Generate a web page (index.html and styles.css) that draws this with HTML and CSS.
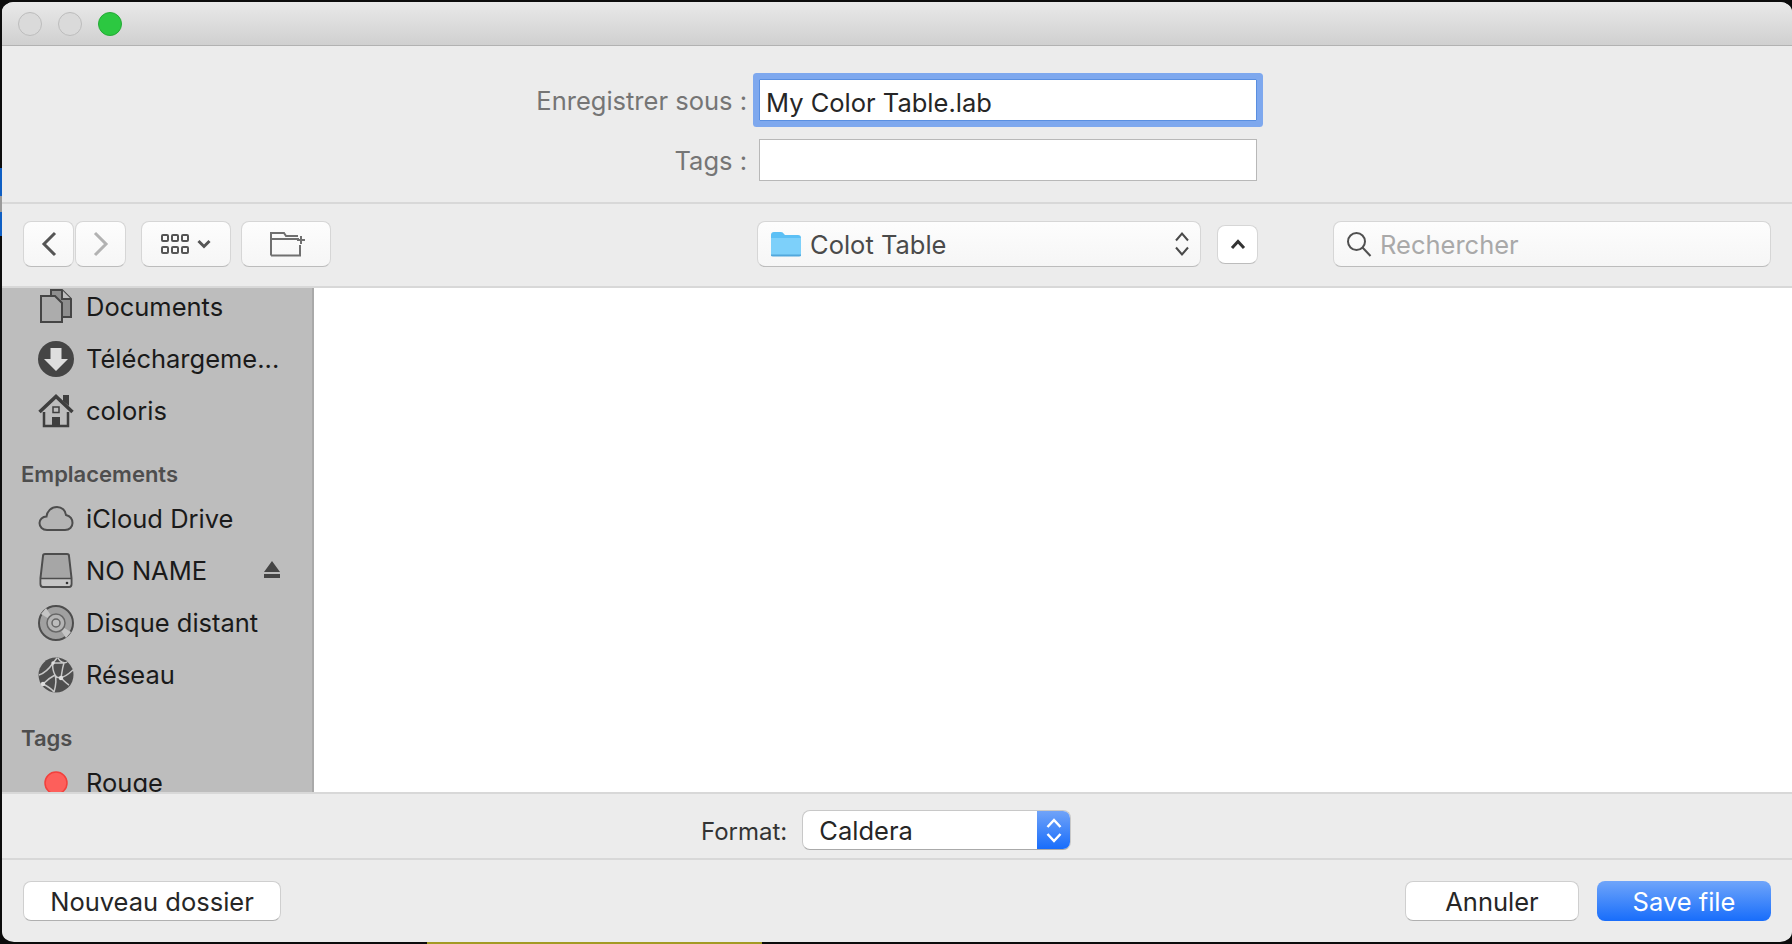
FILE: index.html
```html
<!DOCTYPE html>
<html lang="fr">
<head>
<meta charset="utf-8">
<title>Enregistrer sous</title>
<link rel="stylesheet" href="styles.css">
</head>
<body>
<div class="desktop">
  <div class="edge"><i class="edge-blue-a"></i><i class="edge-grey"></i><i class="edge-blue-b"></i></div>
  <main class="window">
    <header class="titlebar">
      <span class="light"></span><span class="light"></span><span class="light light-green"></span>
    </header>
    <section class="form">
      <label class="form-label">Enregistrer sous :</label>
      <div class="field field-focus">My Color Table.lab</div>
      <label class="form-label">Tags :</label>
      <div class="field"></div>
    </section>
    <nav class="toolbar">
      <button class="tool tool-nav"><svg width="16" height="26" viewBox="0 0 16 26"><path d="M14 2 3 13l11 11" class="st st-dark"/></svg></button>
      <button class="tool tool-nav tool-next"><svg width="16" height="26" viewBox="0 0 16 26"><path d="M2 2l11 11L2 24" class="st st-dim"/></svg></button>
      <button class="tool tool-view">
        <svg width="28" height="20" viewBox="0 0 28 20"><g class="sq"><rect x="1" y="1" width="6" height="6" rx="1"/><rect x="11" y="1" width="6" height="6" rx="1"/><rect x="21" y="1" width="6" height="6" rx="1"/><rect x="1" y="13" width="6" height="6" rx="1"/><rect x="11" y="13" width="6" height="6" rx="1"/><rect x="21" y="13" width="6" height="6" rx="1"/></g></svg>
        <svg width="14" height="10" viewBox="0 0 14 10"><path d="M1.500 2 7 7.500 12.500 2" class="st st-dark"/></svg>
      </button>
      <button class="tool tool-folder"><svg class="new-folder" width="36" height="26" viewBox="0 0 36 26"><path d="M1 24.500V2h13l2 3h12M1 8h28M30 14v10.500H1" class="st-thin"/><path d="M27 9h8M31 5v8" class="st-thin"/></svg></button>
      <button class="tool path-popup">
        <svg class="blue-folder" width="32" height="26" viewBox="0 0 32 26"><path d="M1 4q0-3 3-3h7q2 0 3 2l1 1h13q3 0 3 3v16q0 2-2 2H3q-2 0-2-2z" fill="#5cc0f5"/><path d="M1 7h30v16q0 2-2 2H3q-2 0-2-2z" fill="#7dd0fa"/><path d="M1 23.500h30v1q0 1-2 1H3q-2 0-2-1z" fill="#52a8dc"/></svg>
        <span class="path-name">Colot Table</span>
        <svg class="stepper" width="16" height="26" viewBox="0 0 16 26"><path d="M2 9.500 8 2.500l6 7M2 16.500l6 7 6-7" class="st-step"/></svg>
      </button>
      <button class="tool tool-up"><svg width="16" height="11" viewBox="0 0 16 11"><path d="M2 9l6-6.500L14 9" class="st st-black"/></svg></button>
      <div class="tool search">
        <svg width="26" height="26" viewBox="0 0 26 26"><circle cx="10.500" cy="10.500" r="8.500" class="st-search"/><path d="M16.500 16.500l8 8.500" class="st-search"/></svg>
        <span class="search-text">Rechercher</span>
      </div>
    </nav>
    <div class="browser">
      <aside class="sidebar">
        <div class="side-list">
          <div class="side-row">
            <svg class="side-icon" viewBox="0 0 36 36"><path d="M13 1h11l9 9v18H13z" fill="#8e8e8e" stroke="#454545" stroke-width="2"/><path d="M24 1v9h9" fill="#bdbdbd" stroke="#454545" stroke-width="2"/><path d="M3 7h14l7 7v19H3z" fill="#acacac" stroke="#454545" stroke-width="2"/></svg>
            <span class="side-text">Documents</span>
          </div>
          <div class="side-row">
            <svg class="side-icon" viewBox="0 0 36 36"><circle cx="18" cy="18" r="18" fill="#454545"/><path d="M12.500 7h11v11h6.500L18 30 6 18h6.500z" fill="#dedede"/></svg>
            <span class="side-text">Téléchargeme...</span>
          </div>
          <div class="side-row">
            <svg class="side-icon" viewBox="0 0 36 36"><path d="M25 2h6v11l-6-5z" fill="#3f3f3f"/><path d="M6 16v17h24V16" fill="#bdbdbd" stroke="#3f3f3f" stroke-width="2.500"/><path d="M1.500 19 18 3.500 34.500 19" fill="#bdbdbd" stroke="#3f3f3f" stroke-width="3.500"/><rect x="15" y="14" width="6" height="5.500" fill="none" stroke="#3f3f3f" stroke-width="1.500"/><rect x="14" y="24" width="8" height="9" fill="#3f3f3f"/></svg>
            <span class="side-text">coloris</span>
          </div>
          <h2 class="side-head">Emplacements</h2>
          <div class="side-row">
            <svg class="side-icon" viewBox="0 0 36 36"><path d="M9 29C4.500 29 1.500 26 1.500 22c0-3.500 3-6.500 7-6.500C9 10.500 13 6 19 6c5 0 8.500 3.500 9 8 3.500 1 6.500 4 6.500 8s-3 7-7.500 7z" fill="#b4b4b4" stroke="#4d4d4d" stroke-width="2"/></svg>
            <span class="side-text">iCloud Drive</span>
          </div>
          <div class="side-row">
            <svg class="side-icon" viewBox="0 0 36 36"><path d="M7 1h22q2 0 2 2l2.500 22v6q0 3-2.500 3H5q-2.500 0-2.500-3v-6L5 3q0-2 2-2z" fill="#a6a6a6" stroke="#4d4d4d" stroke-width="2"/><path d="M3.500 26h29v5q0 2-2 2h-25q-2 0-2-2z" fill="#c6c6c6"/><path d="M3 25.500h30" stroke="#4d4d4d" stroke-width="1.500"/><circle cx="29" cy="30" r="1.300" fill="#333"/></svg>
            <span class="side-text">NO NAME</span>
            <svg class="eject" width="16" height="17" viewBox="0 0 16 17"><path d="M8 0l8 11H0z M0 13h16v4H0z" fill="#454545"/></svg>
          </div>
          <div class="side-row">
            <svg class="side-icon" viewBox="0 0 36 36"><circle cx="18" cy="18" r="17" fill="#a0a0a0" stroke="#4d4d4d" stroke-width="2"/><path d="M18 18 8 3 3 9zM18 18l10 15 5-6z" fill="#c4c4c4"/><circle cx="18" cy="18" r="9" fill="#b4b4b4" stroke="#666" stroke-width="1.500"/><circle cx="18" cy="18" r="4" fill="#bcbcbc" stroke="#666" stroke-width="1.500"/></svg>
            <span class="side-text">Disque distant</span>
          </div>
          <div class="side-row">
            <svg class="side-icon" viewBox="0 0 36 36"><circle cx="18" cy="18" r="17.500" fill="#4f4f4f"/><path d="M1 18c6-2 10-6 14-12l4-5M15 6c-1 5 0 8 2 12s7 5 18-5M5 27c4-4 8-7 12-9M17 18c2 5 1 10-1 17M23 21c3 3 6 6 8 7M20 1c2 4 6 6 9 4M23 21c1-5 1-9 3-15M5 27c4 2 8 4 11 8M15 6c4 0 8 0 11 0" fill="none" stroke="#c8c8c8" stroke-width="1.500"/><circle cx="15" cy="6" r="1.700" fill="#ddd"/><circle cx="5" cy="27" r="2.200" fill="#ddd"/><circle cx="23" cy="21" r="2.200" fill="#ddd"/></svg>
            <span class="side-text">Réseau</span>
          </div>
          <h2 class="side-head">Tags</h2>
          <div class="side-row">
            <svg class="side-icon" viewBox="0 0 36 36"><circle cx="18" cy="18" r="11" fill="#fd5f5b" stroke="#f2403c" stroke-width="1.500"/></svg>
            <span class="side-text">Rouge</span>
          </div>
        </div>
      </aside>
      <div class="files"></div>
    </div>
    <div class="format-row">
      <span class="format-label">Format:</span>
      <div class="format-select">
        <span class="format-value">Caldera</span>
        <span class="format-step"><svg width="16" height="25" viewBox="0 0 16 25"><path d="M1.500 9 8 2l6.500 7M1.500 16 8 23l6.500-7" class="st-white"/></svg></span>
      </div>
    </div>
    <footer class="actions">
      <button class="btn btn-new">Nouveau dossier</button>
      <button class="btn btn-cancel">Annuler</button>
      <button class="btn btn-save">Save file</button>
    </footer>
  </main>
</div>
<div class="shelf"></div>
</body>
</html>
```
FILE: styles.css
```css
* { box-sizing: border-box; }
html, body { margin: 0; height: 944px; overflow: hidden; }
body { background: #0c0c0c; font-family: Inter, "Liberation Sans", sans-serif; font-size: 25.5px; color: #262626; }
button { font: inherit; color: inherit; margin: 0; padding: 0; }

.desktop { display: flex; height: 942px; }
.edge { width: 2px; padding-top: 168px; flex: none; }
.edge i { display: block; }
.edge-blue-a { height: 28px; background: #0f5fc4; }
.edge-grey { height: 16px; background: #9a9a9a; }
.edge-blue-b { height: 24px; background: #0f5fc4; }
.shelf { height: 2px; width: 335px; margin-left: 427px; background: #a39a24; }

.window { width: 1790px; height: 940px; margin-top: 2px; background: #ececec; border-radius: 12px / 10px; overflow: hidden; display: flex; flex-direction: column; }

.titlebar { height: 44px; flex: none; display: flex; align-items: center; gap: 16px; padding-left: 16px; background: linear-gradient(#e9e9e9, #d0d0d0); border-bottom: 1px solid #b2b2b2; }
.light { width: 24px; height: 24px; border-radius: 50%; background: #dadada; border: 1px solid #bcbcbc; }
.light-green { background: #2cc841; border-color: #25a936; }

.form { height: 158px; flex: none; display: grid; grid-template-columns: 1fr 498px; grid-auto-rows: 42px; column-gap: 12px; row-gap: 18px; padding: 33px 535px 0 0; border-bottom: 2px solid #d8d8d8; }
.form-label { justify-self: end; align-self: center; color: #757575; padding-top: 1px; }
.field { background: #fff; border: 1px solid #b8b8b8; line-height: 42px; padding-left: 6px; height: 42px; }
.field-focus { border-color: #5a8fe0; box-shadow: 0 0 0 6px #7ea8ee; border-radius: 1px; line-height: 46px; }

.toolbar { height: 84px; flex: none; display: flex; align-items: center; padding: 0 22px 2px 21px; border-bottom: 2px solid #d8d8d8; }
.tool { height: 46px; display: flex; align-items: center; justify-content: center; background: linear-gradient(#fdfdfd, #f6f6f6); border: 1px solid #d6d6d6; border-bottom-color: #bcbcbc; border-radius: 8px; flex: none; }
.tool-nav { width: 51px; }
.tool-next { margin-left: 1px; }
.tool-view { width: 90px; margin-left: 15px; gap: 8px; }
.tool-folder { width: 90px; margin-left: 10px; }
.new-folder { margin-left: 4px; }
.path-popup { width: 444px; margin-left: 426px; justify-content: flex-start; padding-left: 12px; }
.blue-folder { margin-right: 8px; }
.path-name { color: #4a4a4a; }
.stepper { margin-left: auto; margin-right: 10px; }
.tool-up { width: 41px; height: 39px; margin-left: 16px; background: #fff; }
.search { width: 438px; margin-left: 75px; justify-content: flex-start; padding-left: 12px; gap: 8px; }
.search-text { color: #a9a9a9; }

.st { fill: none; stroke-width: 3; }
.st-dark { stroke: #555; }
.st-dim { stroke: #b2b2b2; }
.st-black { stroke: #333; stroke-width: 3; }
.st-thin { fill: none; stroke: #707070; stroke-width: 2; }
.st-step { fill: none; stroke: #4a4a4a; stroke-width: 2; }
.st-search { fill: none; stroke: #505050; stroke-width: 2; }
.st-white { fill: none; stroke: #fff; stroke-width: 2.500; }
.sq rect { fill: none; stroke: #555; stroke-width: 2; }

.browser { height: 504px; flex: none; display: flex; }
.sidebar { width: 312px; flex: none; background: #bdbdbd; border-right: 2px solid #a9a9a9; overflow: hidden; }
.side-list { margin-top: -7px; padding: 0 32px 0 36px; }
.side-row { height: 52px; display: flex; align-items: center; gap: 12px; color: #1a1a1a; }
.side-text { padding-bottom: 2px; }
.side-icon { width: 36px; height: 36px; flex: none; }
.eject { margin-left: auto; margin-bottom: 4px; }
.side-head { margin: 0 0 0 -17px; height: 56px; padding-top: 24px; font-size: 22px; line-height: 26px; font-weight: 600; color: #4e4e4e; }
.files { flex: 1; background: #fff; }

.format-row { height: 68px; flex: none; display: flex; align-items: flex-start; gap: 15px; padding: 16px 0 0 699px; border-top: 2px solid #d8d8d8; border-bottom: 2px solid #d8d8d8; }
.format-label { font-size: 24px; line-height: 44px; color: #333; }
.format-select { width: 269px; height: 40px; display: flex; background: #fff; border: 1px solid #c8c8c8; border-bottom-color: #aaa; border-radius: 8px; overflow: hidden; }
.format-value { flex: 1; padding-left: 16px; line-height: 39px; }
.format-step { width: 33px; display: flex; align-items: center; justify-content: center; background: linear-gradient(#70a3f8, #186dfb); }

.actions { flex: 1; display: flex; align-items: flex-start; gap: 18px; padding: 21px 21px 0 21px; }
.btn { height: 40px; background: #fff; border: 1px solid #cfcfcf; border-bottom-color: #b0b0b0; border-radius: 8px; }
.btn-new { width: 258px; }
.btn-cancel { width: 174px; margin-left: auto; }
.btn-save { width: 174px; color: #fff; border: 0; background: linear-gradient(#6fa5fa, #186dfb); }
```
